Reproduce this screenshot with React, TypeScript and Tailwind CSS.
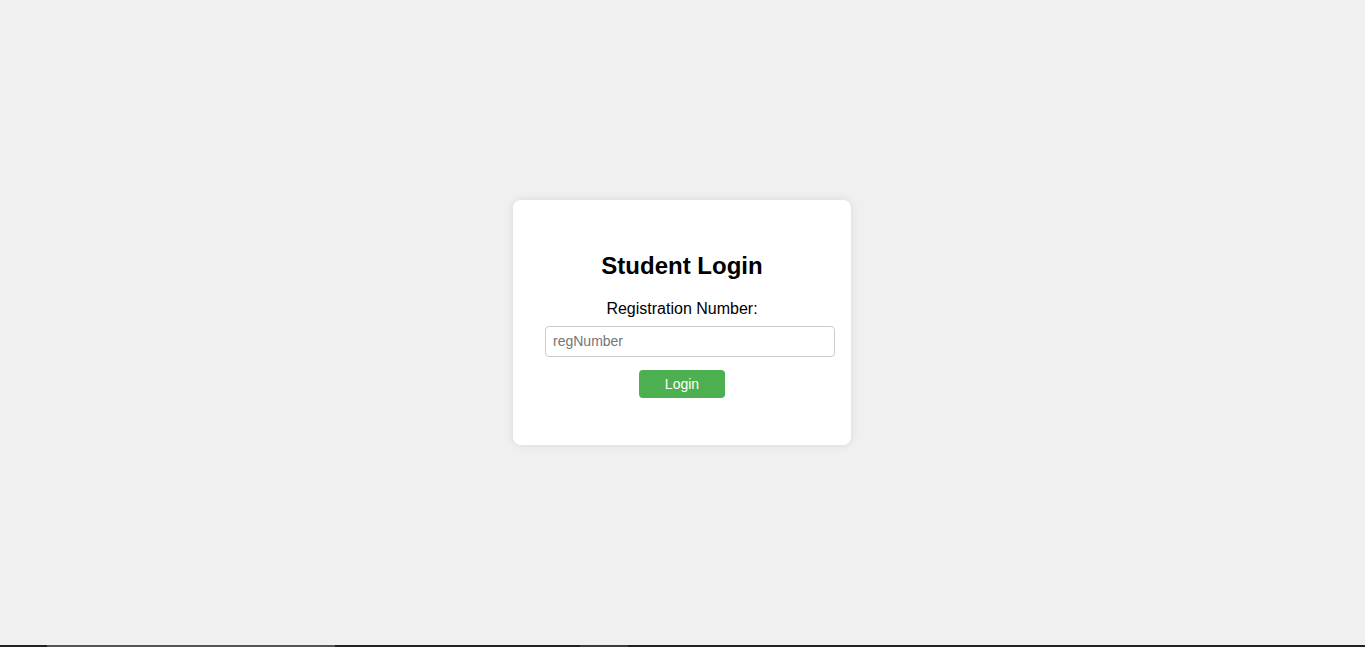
import React from 'react';

const App = () => {
  return (
    <div className="flex h-screen flex-col bg-[#f0f0f0] font-['Liberation_Sans',Arial,sans-serif] text-black">
      {/* Login card */}
      <main className="flex flex-1 items-center justify-center">
        <div className="mt-[-1px] mr-[1px] flex w-[338px] flex-col items-center rounded-lg bg-white px-8 pt-[52px] pb-[47px] shadow-[0_0_10px_rgba(0,0,0,0.1)]">
          <h2 className="text-[24px] leading-[28px] font-bold">Student Login</h2>
          <label htmlFor="regNumber" className="mt-[20px] text-[16px] leading-[18px]">
            Registration Number:
          </label>
          <input
            id="regNumber"
            type="text"
            placeholder="regNumber"
            className="mt-[8px] h-[31px] w-[290px] shrink-0 self-start rounded border border-[#cccccc] px-[7px] text-[14px] outline-none placeholder:text-[#757575]"
          />
          <button className="mt-[13px] h-[28px] w-[86px] rounded bg-[#4caf50] pt-[2px] text-[14px] font-medium text-white">
            Login
          </button>
        </div>
      </main>

      {/* Bottom strip */}
      <div className="flex h-[2px] shrink-0 bg-[#222222]">
        <div className="w-[47px]" />
        <div className="w-[288px] bg-[#555555]" />
        <div className="w-[245px]" />
        <div className="w-[48px] bg-[#3a3a3a]" />
      </div>
    </div>
  );
};

export default App;
